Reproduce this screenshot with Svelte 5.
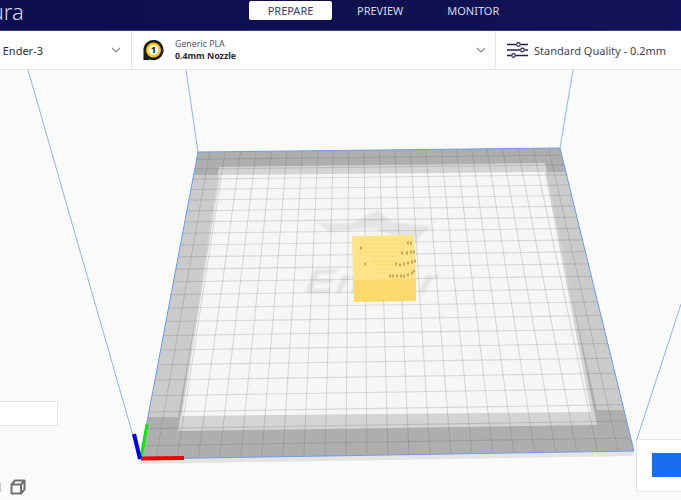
<script lang="ts">
  type Pt = [number, number];

  // corners of the build plate on screen
  const tl: Pt = [198, 152];
  const tr: Pt = [560, 148];
  const br: Pt = [634, 451];
  const bl: Pt = [140, 459];

  // unit square to plate quad
  function makeProjection() {
    const dx1 = tr[0] - br[0];
    const dx2 = bl[0] - br[0];
    const dx3 = tl[0] - tr[0] + br[0] - bl[0];
    const dy1 = tr[1] - br[1];
    const dy2 = bl[1] - br[1];
    const dy3 = tl[1] - tr[1] + br[1] - bl[1];
    const den = dx1 * dy2 - dx2 * dy1;
    const g = (dx3 * dy2 - dx2 * dy3) / den;
    const h = (dx1 * dy3 - dx3 * dy1) / den;
    const a = tr[0] - tl[0] + g * tr[0];
    const b = bl[0] - tl[0] + h * bl[0];
    const d = tr[1] - tl[1] + g * tr[1];
    const e = bl[1] - tl[1] + h * bl[1];
    return (u: number, v: number): Pt => {
      const w = g * u + h * v + 1;
      return [(a * u + b * v + tl[0]) / w, (d * u + e * v + tl[1]) / w];
    };
  }

  const project = makeProjection();
  const offsets = Array.from({ length: 23 }, (_, i) => 0.5 + ((i - 11) * 10) / 235);

  const gridLines = offsets.flatMap((o) => {
    const a = project(o, 0);
    const b = project(o, 1);
    const c = project(0, o);
    const d = project(1, o);
    return [
      { x1: a[0], y1: a[1], x2: b[0], y2: b[1] },
      { x1: c[0], y1: c[1], x2: d[0], y2: d[1] }
    ];
  });

  const plate = [tl, tr, br, bl].join(" ");

  const stripes = [
    { y: 240, x1: 358, x2: 408 },
    { y: 244, x1: 360, x2: 404 },
    { y: 248, x1: 363, x2: 402 },
    { y: 252, x1: 366, x2: 400 },
    { y: 256, x1: 369, x2: 398 },
    { y: 261, x1: 372, x2: 396 },
    { y: 265, x1: 375, x2: 394 },
    { y: 269, x1: 378, x2: 392 },
    { y: 273, x1: 381, x2: 388 }
  ];

  const ticks: Pt[] = [
    [361, 248], [365, 264], [408, 243], [411, 243],
    [402, 253], [407, 253], [411, 252], [414, 252],
    [396, 264], [400, 265], [404, 264], [408, 263], [412, 262], [415, 261],
    [390, 276], [393, 276], [397, 276], [401, 276], [404, 276], [408, 275], [412, 273], [414, 271]
  ];
</script>

<div class="app">
  <header class="topbar">
    <div class="logo"><span>Cura</span></div>
    <nav class="tabs">
      <span class="tab active">PREPARE</span>
      <span class="tab preview">PREVIEW</span>
      <span class="tab monitor">MONITOR</span>
    </nav>
  </header>

  <div class="toolbar">
    <div class="section printer">
      <span class="printer-name">Creality Ender-3</span>
      <svg class="chevron" viewBox="0 0 10 6" width="10" height="6"><path d="M1 1l4 4 4-4" /></svg>
    </div>
    <div class="section material">
      <svg class="extruder" viewBox="0 0 24 24" width="23" height="23">
        <path d="M1.500 22V11.500a10.500 10.500 0 1 1 6 9.500V22z" fill="#1c1c1c" />
        <circle cx="12" cy="11.500" r="7.800" fill="#fcc419" />
        <circle cx="12" cy="11.500" r="5.200" fill="#fff" />
        <text x="12" y="15" text-anchor="middle">1</text>
      </svg>
      <div class="material-text">
        <span class="brand">Generic PLA</span>
        <span class="nozzle">0.4mm Nozzle</span>
      </div>
      <svg class="chevron" viewBox="0 0 10 6" width="10" height="6"><path d="M1 1l4 4 4-4" /></svg>
    </div>
    <div class="section quality">
      <svg viewBox="0 0 21 16" width="21" height="16" class="sliders">
        <path d="M0 2.500h9M14 2.500h7M0 8h13M18 8h3M0 13.500h4M9 13.500h12" />
        <circle cx="11.500" cy="2.500" r="1.800" />
        <circle cx="15.500" cy="8" r="1.800" />
        <circle cx="6.500" cy="13.500" r="1.800" />
      </svg>
      <span>Standard Quality - 0.2mm</span>
    </div>
  </div>

  <main class="viewport">
    <svg class="scene" viewBox="0 70 681 430" width="681" height="430">
      <defs>
        <filter id="soft"><feGaussianBlur stdDeviation="1.200" /></filter>
        <filter id="softer"><feGaussianBlur stdDeviation="0.4" /></filter>
      </defs>

      <!-- build volume edges -->
      <g class="volume">
        <line x1="28" y1="70" x2="136" y2="446" />
        <line x1="186" y1="70" x2="198" y2="152" />
        <line x1="573" y1="70" x2="560" y2="148" />
        <line x1="681" y1="304" x2="636" y2="442" />
      </g>

      <polygon points="140,459 634,451 632,456 140,464" fill="#e4e4e4" />

      <g filter="url(#softer)">
        <polygon points={plate} fill="#aeaeae" />
        <!-- side strips -->
        <polygon points="193.5,175 220,175 178,417 148,417" fill="#cbcbcb" />
        <polygon points="544,172 566,172 624,410 597,410" fill="#cbcbcb" />
        <!-- inner area -->
        <polygon points="219,167 545,163 597,425 178,431" fill="#d4d4d4" />
        <polygon points="220,175 545,172 591,412 182,416" fill="#f6f6f6" />
      </g>

      <g class="ghost" filter="url(#soft)">
        <polygon points="316,222 350,224 378,210 392,222 432,226 414,242 372,228 330,232" />
        <text x="0" y="0" transform="translate(302 293) skewX(-22) scale(1.25 1)">Ender</text>
      </g>

      <g class="grid" filter="url(#softer)">
        {#each gridLines as l}
          <line x1={l.x1} y1={l.y1} x2={l.x2} y2={l.y2} />
        {/each}
      </g>

      <polygon class="outline" points={plate} />

      <!-- printed model -->
      <g filter="url(#softer)">
        <polygon points="352,236 414,235 416,280 353,281" fill="#ffe388" />
        <polygon points="353,280 416,279 416,301 354,302" fill="#fcd96c" />
        <g class="stripes">
          {#each stripes as s}
            <line x1={s.x1} y1={s.y} x2={s.x2} y2={s.y} />
          {/each}
        </g>
        <g class="ticks">
          {#each ticks as t}
            <line x1={t[0]} y1={t[1] - 1.5} x2={t[0]} y2={t[1] + 1.5} />
          {/each}
        </g>
      </g>

      <!-- axes -->
      <line x1="141" y1="458" x2="147" y2="424" stroke="#00f000" stroke-width="3" />
      <line x1="140" y1="459" x2="134" y2="434" stroke="#0000e6" stroke-width="4" />
      <line x1="141" y1="458.5" x2="184" y2="458" stroke="#f00000" stroke-width="4" />
    </svg>

    <div class="field"></div>
    <div class="view-icons">
      <span class="cut-icon"></span>
      <svg viewBox="0 0 16 16" width="16" height="16">
        <path d="M1.500 5.500L5 1.500h9.500v9l-3.500 4h-9.500zM1.500 5.500h9.500v9M11 5.500l3.500-4" />
      </svg>
    </div>
    <div class="action-panel">
      <div class="slice-button"></div>
    </div>
  </main>
</div>

<style>
  :global(body) {
    margin: 0;
    background: #fafafa;
  }

  .app {
    width: 681px;
    height: 500px;
    overflow: hidden;
    display: flex;
    flex-direction: column;
    font-family: "Noto Sans", sans-serif;
    color: #2d2d3f;
  }

  .topbar {
    height: 30px;
    flex: none;
    display: flex;
    background: linear-gradient(90deg, #0c0d4d, #10114f 60%, #12125a);
    border-bottom: 1px solid #3b3c78;
    color: #e6e6ee;
  }

  .logo {
    width: 249px;
    flex: none;
    overflow: hidden;
    font-size: 22px;
    font-weight: 300;
    line-height: 22px;
    color: #d5d6e8;
  }

  .logo span {
    display: block;
    margin-left: -23px;
  }

  .tabs {
    display: flex;
    align-items: flex-start;
    font-size: 11px;
  }

  .tab {
    line-height: 19px;
    margin-top: 1px;
    color: #d8d8e6;
  }

  .tab.active {
    width: 83px;
    text-align: center;
    background: #fff;
    border-radius: 2px;
    color: #3a3b73;
  }

  .tab.preview {
    margin-left: 25px;
  }

  .tab.monitor {
    margin-left: 44px;
  }

  .toolbar {
    height: 38px;
    flex: none;
    display: flex;
    background: #fff;
    border-bottom: 1px solid #e2e2e2;
  }

  .section {
    display: flex;
    align-items: center;
    border-right: 1px solid #e6e6e6;
    box-sizing: border-box;
    overflow: hidden;
  }

  .printer {
    width: 132px;
    justify-content: flex-end;
    padding-right: 10px;
    font-size: 11px;
    white-space: nowrap;
  }

  .printer-name {
    margin-right: 68px;
  }

  .chevron {
    flex: none;
  }

  .chevron path {
    fill: none;
    stroke: #8a8a8a;
    stroke-width: 1.1;
  }

  .material {
    width: 364px;
    padding: 0 9px 0 10px;
  }

  .extruder text {
    font-size: 10px;
    font-weight: 700;
    fill: #111;
  }

  .material-text {
    flex: 1;
    display: flex;
    flex-direction: column;
    margin-left: 10px;
    font-size: 8.8px;
    line-height: 12px;
  }

  .brand {
    color: #55556a;
  }

  .nozzle {
    font-weight: 700;
    color: #2a2a3a;
  }

  .quality {
    flex: 1;
    border-right: none;
    padding-left: 11px;
    gap: 6px;
    font-size: 11px;
    color: #43435a;
    white-space: nowrap;
  }

  .sliders path {
    fill: none;
    stroke: #20214f;
    stroke-width: 1.5;
  }

  .sliders circle {
    fill: none;
    stroke: #20214f;
    stroke-width: 1.2;
  }

  .viewport {
    flex: 1;
    position: relative;
    background: #fafafa;
  }

  .scene {
    position: absolute;
    left: 0;
    top: 0;
    display: block;
  }

  .volume line {
    stroke: #8fb4f4;
    stroke-width: 1;
  }

  .grid line {
    stroke: #555;
    stroke-opacity: 0.19;
    stroke-width: 1.1;
  }

  .outline {
    fill: none;
    stroke: #6b9df0;
    stroke-width: 1;
  }

  .ghost {
    fill: #e4e4e4;
  }

  .ghost text {
    font-family: "Liberation Sans", sans-serif;
    font-size: 34px;
    font-weight: 700;
    letter-spacing: 2px;
  }

  .stripes line {
    stroke: #fcd970;
    stroke-width: 1.2;
  }

  .ticks line {
    stroke: #9c8136;
    stroke-width: 1.2;
  }

  .field {
    position: absolute;
    left: -2px;
    top: 331px;
    width: 58px;
    height: 23px;
    background: #fff;
    border: 1px solid #e6e6e6;
  }

  .view-icons {
    position: absolute;
    left: 0;
    top: 408px;
    width: 30px;
    height: 18px;
    display: flex;
    align-items: center;
    justify-content: space-between;
  }

  .cut-icon {
    width: 1px;
    height: 9px;
    background: #c9c9c9;
  }

  .view-icons svg {
    margin-right: 4px;
  }

  .view-icons path {
    fill: none;
    stroke: #6e6e6e;
    stroke-width: 2;
    stroke-linejoin: round;
  }

  .action-panel {
    position: absolute;
    left: 636px;
    top: 369px;
    width: 60px;
    height: 51px;
    background: #fff;
    border: 1px solid #e4e4e4;
    border-radius: 2px;
  }

  .slice-button {
    margin: 13px 0 0 15px;
    height: 24px;
    background: #196ef0;
  }
</style>
